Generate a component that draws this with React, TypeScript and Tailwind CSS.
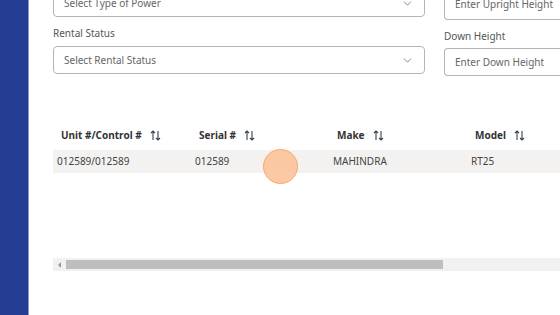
import { ChevronDown } from 'lucide-react';

function SortIcon() {
    return (
        <svg width="11" height="11" viewBox="0 0 11 11" fill="none" stroke="#374151" strokeWidth="1.1" className="ml-2">
            <path d="M3 10V1M1 3l2-2 2 2" />
            <path d="M8 1v9M6 8l2 2 2-2" />
        </svg>
    );
}

export default function App() {
    const cols = ['Unit #/Control #', 'Serial #', 'Make', 'Model'];
    const row = ['012589/012589', '012589', 'MAHINDRA', 'RT25'];

    return (
        <div className="flex h-[315px] w-[560px] overflow-hidden bg-white text-[#4b4b4b]" style={{ fontFamily: '"Noto Sans", sans-serif' }}>
            <aside className="w-[29px] shrink-0 border-r border-[#8f9acb] bg-[#263d94]" />
            <main className="flex-1 pl-[24px]">
                <div className="-mt-[11px] flex gap-[19px]">
                    <div className="w-[372px]">
                        <div className="flex h-[28px] items-center justify-between rounded-[4px] border border-[#b5b5b5] px-[10px] text-[10px] text-[#666]">
                            <span>Select Type of Power</span>
                            <ChevronDown size={13} strokeWidth={1.3} className="text-[#555]" />
                        </div>
                        <div className="mt-[9px] text-[10px] leading-[14px] text-[#555]">Rental Status</div>
                        <div className="mt-[6px] flex h-[28px] items-center justify-between rounded-[4px] border border-[#b5b5b5] px-[10px] text-[10px] text-[#666]">
                            <span>Select Rental Status</span>
                            <ChevronDown size={13} strokeWidth={1.3} className="text-[#555]" />
                        </div>
                    </div>
                    <div className="flex-1">
                        <div className="flex h-[31px] items-center rounded-l-[4px] border border-r-0 border-[#b5b5b5] px-[10px] text-[10px] text-[#666]">
                            Enter Upright Height
                        </div>
                        <div className="mt-[9px] text-[10px] leading-[14px] text-[#555]">Down Height</div>
                        <div className="mt-[5px] flex h-[28px] items-center rounded-l-[4px] border border-r-0 border-[#b5b5b5] px-[10px] text-[10px] text-[#666]">
                            Enter Down Height
                        </div>
                    </div>
                </div>

                <div className="relative mt-[46px]">
                    <div className="grid grid-cols-[138px_138px_138px_138px]">
                        {cols.map((c) => (
                            <div key={c} className="flex h-[26px] items-center pl-[8px] text-[10px] font-bold text-[#333]">
                                {c}
                                <SortIcon />
                            </div>
                        ))}
                    </div>
                    <div className="mt-[2px] grid h-[23px] grid-cols-[138px_138px_138px_138px] bg-[#f3f2f1]">
                        {row.map((v, i) => (
                            <div key={i} className="flex items-center pl-[4px] text-[10px] text-[#444]">
                                {v}
                            </div>
                        ))}
                    </div>
                    <div className="absolute left-[210px] top-[27px] h-[35px] w-[35px] rounded-full border border-[#fba866] bg-[#fbc39a]/90" />

                    <div className="mt-[85px] flex h-[13px] items-center bg-[#f1f1f1]">
                        <div className="flex w-[13px] items-center justify-center">
                            <div className="h-0 w-0 border-y-[3px] border-r-[3px] border-y-transparent border-r-[#999]" />
                        </div>
                        <div className="h-[9px] w-[377px] bg-[#bebebe]" />
                    </div>
                </div>
            </main>
        </div>
    );
}
